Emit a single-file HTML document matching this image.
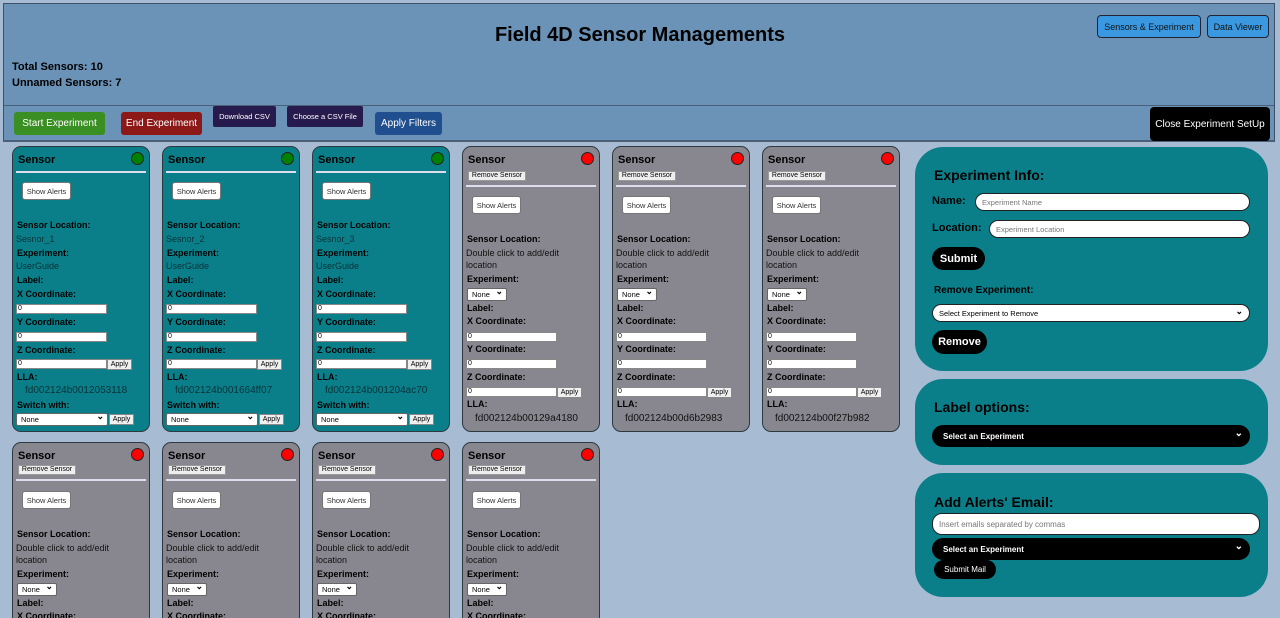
<!DOCTYPE html>
<html><head><meta charset="utf-8"><style>
*{box-sizing:border-box;margin:0;padding:0}
html{width:1280px;height:618px;overflow:hidden}
body{width:1280px;height:618px;overflow:hidden;background:#a7bcd3;font-family:"Liberation Sans",sans-serif;position:relative;color:#000}
.a{position:absolute}
#hdr{left:3px;top:3px;width:1272px;height:104px;background:#6b93b7;border:1px solid #3d5068;border-bottom:2px solid #4a5f78}
#tb{left:3px;top:106px;width:1272px;height:36px;background:#6b93b7;border-left:1px solid #3d5068;border-right:1px solid #3d5068;border-bottom:2px solid #4a5f78}
.btn{position:absolute;display:flex;align-items:center;justify-content:center;color:#fff;white-space:nowrap}
.card{position:absolute;width:138px;height:286px;border:1px solid #2c3a40;border-radius:9px;overflow:hidden}
.r2{height:190px}
.t{background:#0b7f89}.g{background:#88878f}
.card>*{position:absolute;white-space:nowrap}
.h{left:5px;top:7px;font-weight:bold;font-size:11px}
.dot{left:118px;top:5px;width:13px;height:13px;border-radius:50%;border:1px solid #222}
.t .dot{background:#008000}.g .dot{background:#f00}
.ln{left:3px;width:130px;height:2px;background:#dde}
.sa{left:9px;width:49px;height:18px;background:#fff;border:1px solid #777;border-radius:3px;font-size:7.5px;display:flex;align-items:center;justify-content:center;color:#333}
.lb{left:4px;font-weight:bold;font-size:9px}
.v{left:3px;font-size:9px}
.t .v{color:#073238}
.g .v{color:#111}
.in{left:3px;width:91px;height:10px;background:#fff;border:1px solid #888;font-size:7px;line-height:8px;padding-left:1px}
.ap{width:25px;height:11px;background:#f0f0f0;border:1px solid #888;font-size:7px;text-align:center;line-height:9px}
.sel{background:#fff;border:1px solid #666;border-radius:2px;font-size:7.5px;line-height:11px;padding-left:4px}
.sel:after{content:"\2304";position:absolute;right:3px;top:-3px;font-size:9px;font-weight:bold}
.rm{left:5px;width:58px;height:10px;background:#eee;border:1px solid #999;font-size:7px;text-align:center;line-height:8px}
.box{position:absolute;left:915px;width:353px;background:#0b7f89;border-radius:28px}
.box>*{position:absolute;white-space:nowrap}
.bt{font-weight:bold;font-size:14px}
.pill{background:#fff;border:1px solid #222;border-radius:10px;font-size:7.5px;color:#777;padding-left:6px;display:flex;align-items:center}
.blk{background:#000;color:#fff;border-radius:12px;font-weight:bold;display:flex;align-items:center;justify-content:center}
</style></head><body>
<div id="hdr" class="a"></div>
<div class="a" style="left:0;top:24px;width:1280px;text-align:center;font-weight:bold;font-size:20px">Field 4D Sensor Managements</div>
<div class="a" style="left:12px;top:61px;font-weight:bold;font-size:11px">Total Sensors: 10</div>
<div class="a" style="left:12px;top:77px;font-weight:bold;font-size:11px">Unnamed Sensors: 7</div>
<div class="btn" style="left:1097px;top:15px;width:104px;height:23px;background:#3a98e0;border:1px solid #223;border-radius:4px;color:#111;font-size:9px">Sensors &amp; Experiment</div>
<div class="btn" style="left:1207px;top:15px;width:62px;height:23px;background:#3a98e0;border:1px solid #223;border-radius:4px;color:#111;font-size:9px">Data Viewer</div>
<div id="tb" class="a"></div>
<div class="btn" style="left:14px;top:112px;width:91px;height:23px;background:#3a8f23;border-radius:3px;font-size:10px">Start Experiment</div>
<div class="btn" style="left:121px;top:112px;width:81px;height:23px;background:#8d1818;border-radius:3px;font-size:10px">End Experiment</div>
<div class="btn" style="left:213px;top:106px;width:63px;height:21px;background:#261b4c;border-radius:2px;font-size:7.5px">Download CSV</div>
<div class="btn" style="left:287px;top:106px;width:76px;height:21px;background:#261b4c;border-radius:2px;font-size:7.5px">Choose a CSV File</div>
<div class="btn" style="left:375px;top:112px;width:67px;height:23px;background:#1f4f8e;border-radius:3px;font-size:10px">Apply Filters</div>
<div class="btn" style="left:1150px;top:107px;width:120px;height:34px;background:#000;border-radius:4px;font-size:10px">Close Experiment SetUp</div>

<div class="card t" style="left:12px;top:146px"><div class="h">Sensor</div><div class="dot"></div><div class="ln" style="top:24px"></div><div class="sa" style="top:35px">Show Alerts</div><div class="lb" style="top:73px">Sensor Location:</div><div class="v" style="top:87px">Sesnor_1</div><div class="lb" style="top:101px">Experiment:</div><div class="v" style="top:114px">UserGuide</div><div class="lb" style="top:128px">Label:</div><div class="lb" style="top:142px">X Coordinate:</div><div class="in" style="top:157px">0</div><div class="lb" style="top:170px">Y Coordinate:</div><div class="in" style="top:185px">0</div><div class="lb" style="top:198px">Z Coordinate:</div><div class="in" style="top:212px">0</div><div class="ap" style="left:94px;top:212px">Apply</div><div class="lb" style="top:225px">LLA:</div><div class="v" style="left:12px;top:238px;font-size:10px">fd002124b0012053118</div><div class="lb" style="top:253px">Switch with:</div><div class="sel" style="left:3px;top:266px;width:92px;height:13px">None</div><div class="ap" style="left:96px;top:267px">Apply</div></div>
<div class="card t" style="left:162px;top:146px"><div class="h">Sensor</div><div class="dot"></div><div class="ln" style="top:24px"></div><div class="sa" style="top:35px">Show Alerts</div><div class="lb" style="top:73px">Sensor Location:</div><div class="v" style="top:87px">Sesnor_2</div><div class="lb" style="top:101px">Experiment:</div><div class="v" style="top:114px">UserGuide</div><div class="lb" style="top:128px">Label:</div><div class="lb" style="top:142px">X Coordinate:</div><div class="in" style="top:157px">0</div><div class="lb" style="top:170px">Y Coordinate:</div><div class="in" style="top:185px">0</div><div class="lb" style="top:198px">Z Coordinate:</div><div class="in" style="top:212px">0</div><div class="ap" style="left:94px;top:212px">Apply</div><div class="lb" style="top:225px">LLA:</div><div class="v" style="left:12px;top:238px;font-size:10px">fd002124b001664ff07</div><div class="lb" style="top:253px">Switch with:</div><div class="sel" style="left:3px;top:266px;width:92px;height:13px">None</div><div class="ap" style="left:96px;top:267px">Apply</div></div>
<div class="card t" style="left:312px;top:146px"><div class="h">Sensor</div><div class="dot"></div><div class="ln" style="top:24px"></div><div class="sa" style="top:35px">Show Alerts</div><div class="lb" style="top:73px">Sensor Location:</div><div class="v" style="top:87px">Sesnor_3</div><div class="lb" style="top:101px">Experiment:</div><div class="v" style="top:114px">UserGuide</div><div class="lb" style="top:128px">Label:</div><div class="lb" style="top:142px">X Coordinate:</div><div class="in" style="top:157px">0</div><div class="lb" style="top:170px">Y Coordinate:</div><div class="in" style="top:185px">0</div><div class="lb" style="top:198px">Z Coordinate:</div><div class="in" style="top:212px">0</div><div class="ap" style="left:94px;top:212px">Apply</div><div class="lb" style="top:225px">LLA:</div><div class="v" style="left:12px;top:238px;font-size:10px">fd002124b001204ac70</div><div class="lb" style="top:253px">Switch with:</div><div class="sel" style="left:3px;top:266px;width:92px;height:13px">None</div><div class="ap" style="left:96px;top:267px">Apply</div></div>

<div class="card g" style="left:462px;top:146px"><div class="h">Sensor</div><div class="dot"></div><div class="rm" style="top:24px">Remove Sensor</div><div class="ln" style="top:38px"></div><div class="sa" style="top:49px">Show Alerts</div><div class="lb" style="top:87px">Sensor Location:</div><div class="v" style="top:101px">Double click to add/edit</div><div class="v" style="top:113px">location</div><div class="lb" style="top:127px">Experiment:</div><div class="sel" style="left:4px;top:141px;width:40px;height:13px">None</div><div class="lb" style="top:156px">Label:</div><div class="lb" style="top:169px">X Coordinate:</div><div class="in" style="top:185px">0</div><div class="lb" style="top:197px">Y Coordinate:</div><div class="in" style="top:212px">0</div><div class="lb" style="top:225px">Z Coordinate:</div><div class="in" style="top:240px">0</div><div class="ap" style="left:94px;top:240px">Apply</div><div class="lb" style="top:252px">LLA:</div><div class="v" style="left:12px;top:266px;font-size:10px">fd002124b00129a4180</div></div>
<div class="card g" style="left:612px;top:146px"><div class="h">Sensor</div><div class="dot"></div><div class="rm" style="top:24px">Remove Sensor</div><div class="ln" style="top:38px"></div><div class="sa" style="top:49px">Show Alerts</div><div class="lb" style="top:87px">Sensor Location:</div><div class="v" style="top:101px">Double click to add/edit</div><div class="v" style="top:113px">location</div><div class="lb" style="top:127px">Experiment:</div><div class="sel" style="left:4px;top:141px;width:40px;height:13px">None</div><div class="lb" style="top:156px">Label:</div><div class="lb" style="top:169px">X Coordinate:</div><div class="in" style="top:185px">0</div><div class="lb" style="top:197px">Y Coordinate:</div><div class="in" style="top:212px">0</div><div class="lb" style="top:225px">Z Coordinate:</div><div class="in" style="top:240px">0</div><div class="ap" style="left:94px;top:240px">Apply</div><div class="lb" style="top:252px">LLA:</div><div class="v" style="left:12px;top:266px;font-size:10px">fd002124b00d6b2983</div></div>
<div class="card g" style="left:762px;top:146px"><div class="h">Sensor</div><div class="dot"></div><div class="rm" style="top:24px">Remove Sensor</div><div class="ln" style="top:38px"></div><div class="sa" style="top:49px">Show Alerts</div><div class="lb" style="top:87px">Sensor Location:</div><div class="v" style="top:101px">Double click to add/edit</div><div class="v" style="top:113px">location</div><div class="lb" style="top:127px">Experiment:</div><div class="sel" style="left:4px;top:141px;width:40px;height:13px">None</div><div class="lb" style="top:156px">Label:</div><div class="lb" style="top:169px">X Coordinate:</div><div class="in" style="top:185px">0</div><div class="lb" style="top:197px">Y Coordinate:</div><div class="in" style="top:212px">0</div><div class="lb" style="top:225px">Z Coordinate:</div><div class="in" style="top:240px">0</div><div class="ap" style="left:94px;top:240px">Apply</div><div class="lb" style="top:252px">LLA:</div><div class="v" style="left:12px;top:266px;font-size:10px">fd002124b00f27b982</div></div>

<div class="card g r2" style="left:12px;top:442px"><div class="h">Sensor</div><div class="dot"></div><div class="rm" style="top:22px">Remove Sensor</div><div class="ln" style="top:36px"></div><div class="sa" style="top:48px">Show Alerts</div><div class="lb" style="top:86px">Sensor Location:</div><div class="v" style="top:100px">Double click to add/edit</div><div class="v" style="top:112px">location</div><div class="lb" style="top:126px">Experiment:</div><div class="sel" style="left:4px;top:140px;width:40px;height:13px">None</div><div class="lb" style="top:155px">Label:</div><div class="lb" style="top:168px">X Coordinate:</div></div>
<div class="card g r2" style="left:162px;top:442px"><div class="h">Sensor</div><div class="dot"></div><div class="rm" style="top:22px">Remove Sensor</div><div class="ln" style="top:36px"></div><div class="sa" style="top:48px">Show Alerts</div><div class="lb" style="top:86px">Sensor Location:</div><div class="v" style="top:100px">Double click to add/edit</div><div class="v" style="top:112px">location</div><div class="lb" style="top:126px">Experiment:</div><div class="sel" style="left:4px;top:140px;width:40px;height:13px">None</div><div class="lb" style="top:155px">Label:</div><div class="lb" style="top:168px">X Coordinate:</div></div>
<div class="card g r2" style="left:312px;top:442px"><div class="h">Sensor</div><div class="dot"></div><div class="rm" style="top:22px">Remove Sensor</div><div class="ln" style="top:36px"></div><div class="sa" style="top:48px">Show Alerts</div><div class="lb" style="top:86px">Sensor Location:</div><div class="v" style="top:100px">Double click to add/edit</div><div class="v" style="top:112px">location</div><div class="lb" style="top:126px">Experiment:</div><div class="sel" style="left:4px;top:140px;width:40px;height:13px">None</div><div class="lb" style="top:155px">Label:</div><div class="lb" style="top:168px">X Coordinate:</div></div>
<div class="card g r2" style="left:462px;top:442px"><div class="h">Sensor</div><div class="dot"></div><div class="rm" style="top:22px">Remove Sensor</div><div class="ln" style="top:36px"></div><div class="sa" style="top:48px">Show Alerts</div><div class="lb" style="top:86px">Sensor Location:</div><div class="v" style="top:100px">Double click to add/edit</div><div class="v" style="top:112px">location</div><div class="lb" style="top:126px">Experiment:</div><div class="sel" style="left:4px;top:140px;width:40px;height:13px">None</div><div class="lb" style="top:155px">Label:</div><div class="lb" style="top:168px">X Coordinate:</div></div>

<div class="box" style="top:147px;height:224px">
 <div class="bt" style="left:19px;top:20px">Experiment Info:</div>
 <div style="left:17px;top:48px;font-weight:bold;font-size:11px">Name:</div>
 <div class="pill" style="left:60px;top:46px;width:275px;height:18px">Experiment Name</div>
 <div style="left:17px;top:75px;font-weight:bold;font-size:11px">Location:</div>
 <div class="pill" style="left:74px;top:73px;width:261px;height:18px">Experiment Location</div>
 <div class="blk" style="left:17px;top:100px;width:53px;height:23px;font-size:11px">Submit</div>
 <div style="left:19px;top:138px;font-weight:bold;font-size:10px">Remove Experiment:</div>
 <div class="pill" style="left:17px;top:157px;width:318px;height:18px;color:#000">Select Experiment to Remove<span style="position:absolute;right:6px;top:1px;font-weight:bold;font-size:9px">&#8964;</span></div>
 <div class="blk" style="left:17px;top:183px;width:55px;height:24px;font-size:11px">Remove</div>
</div>
<div class="box" style="top:379px;height:86px">
 <div class="bt" style="left:19px;top:20px">Label options:</div>
 <div class="blk" style="left:17px;top:46px;width:318px;height:22px;font-size:8px;justify-content:flex-start;padding-left:11px">Select an Experiment<span style="position:absolute;right:7px;top:3px;font-size:10px">&#8964;</span></div>
</div>
<div class="box" style="top:473px;height:124px">
 <div class="bt" style="left:19px;top:21px">Add Alerts' Email:</div>
 <div class="pill" style="left:17px;top:40px;width:328px;height:22px;font-size:8px">Insert emails separated by commas</div>
 <div class="blk" style="left:17px;top:65px;width:318px;height:22px;font-size:8px;justify-content:flex-start;padding-left:11px">Select an Experiment<span style="position:absolute;right:7px;top:3px;font-size:10px">&#8964;</span></div>
 <div class="blk" style="left:19px;top:87px;width:62px;height:19px;font-size:8px;font-weight:normal;border-radius:10px">Submit Mail</div>
</div>
</body></html>
